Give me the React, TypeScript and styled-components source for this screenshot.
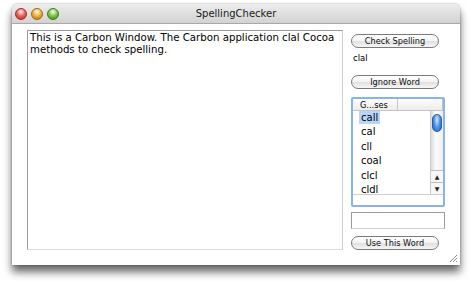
import React from 'react';
import styled, { createGlobalStyle } from 'styled-components';

const GlobalStyle = createGlobalStyle`
  html, body {
    margin: 0;
    padding: 0;
    background: #ffffff;
    font-family: "DejaVu Sans", "Liberation Sans", sans-serif;
  }
`;

const Page = styled.div`
  width: 471px;
  height: 285px;
  padding: 4px 0 0 12px;
  box-sizing: border-box;
  overflow: hidden;
`;

const Window = styled.div`
  width: 448px;
  height: 261px;
  border-radius: 5px 5px 0 0;
  background: #ffffff;
  box-shadow: 0 7px 9px rgba(0, 0, 0, 0.6), 0 0 2px rgba(0, 0, 0, 0.4);
  display: flex;
  flex-direction: column;
  position: relative;
`;

const TitleBar = styled.div`
  height: 21px;
  border-radius: 5px 5px 0 0;
  background: linear-gradient(#ededed, #d2d2d2);
  border-bottom: 1px solid #a8a8a8;
  display: flex;
  align-items: center;
  padding-left: 3px;
  position: relative;
`;

const Light = styled.span<{ $c: string; $d: string }>`
  width: 12px;
  height: 12px;
  border-radius: 50%;
  margin-right: 4px;
  background: radial-gradient(circle at 50% 30%, #ffffff 0%, ${p => p.$c} 45%, ${p => p.$d} 100%);
  border: 1px solid ${p => p.$d};
  box-sizing: border-box;
`;

const Title = styled.div`
  position: absolute;
  left: 0;
  right: 0;
  text-align: center;
  font-size: 10px;
  color: #1a1a1a;
  pointer-events: none;
`;

const Body = styled.div`
  flex: 1;
  display: grid;
  grid-template-columns: 316px 94px;
  column-gap: 8px;
  padding: 6px 15px 15px 15px;
`;

const TextArea = styled.div`
  border: 1px solid #9a9a9a;
  border-right-color: #cfcfcf;
  border-bottom-color: #dcdcdc;
  padding: 1px 2px;
  font-size: 10.2px;
  line-height: 12px;
  color: #000;
`;

const Side = styled.div`
  display: flex;
  flex-direction: column;
  padding-top: 4px;
`;

const PillButton = styled.button<{ $gap?: number }>`
  width: 88px;
  height: 14px;
  margin-top: ${p => p.$gap ?? 0}px;
  border-radius: 7px;
  border: 1px solid #7a7a7a;
  background: linear-gradient(#ffffff 0%, #f3f3f3 50%, #e0e0e0 51%, #f6f6f6 100%);
  font-family: "DejaVu Sans", sans-serif;
  font-size: 8.2px;
  color: #111;
  padding: 0;
  line-height: 12px;
`;

const Label = styled.div`
  font-size: 8.5px;
  margin: 5px 0 12px 2px;
  color: #000;
`;

const ListBox = styled.div`
  margin-top: 8px;
  height: 110px;
  border: 2px solid #8ab3e6;
  border-radius: 2px;
  box-sizing: border-box;
  display: flex;
  flex-direction: column;
  overflow: hidden;
`;

const Header = styled.div`
  height: 12px;
  flex: none;
  display: flex;
  border-bottom: 1px solid #c4c4c4;
  background: linear-gradient(#fdfdfd, #ececec);
  font-size: 8.2px;
  line-height: 12px;
  box-sizing: border-box;
`;

const HeadCell = styled.div<{ $w?: number }>`
  ${p => (p.$w ? `width: ${p.$w}px;` : 'flex: 1;')}
  padding-left: 7px;
  box-sizing: border-box;
  border-right: 1px solid #c4c4c4;
`;

const ListArea = styled.div`
  height: 83px;
  flex: none;
  display: flex;
  border-bottom: 1px solid #cfcfcf;
  overflow: hidden;
`;

const Rows = styled.div`
  flex: 1;
  padding: 0 0 0 6px;
`;

const Row = styled.div`
  height: 14.4px;
  font-size: 10px;
  line-height: 14px;
`;

const Word = styled.span<{ $sel?: boolean }>`
  padding: 1px 2px;
  background: ${p => (p.$sel ? '#b7d5fb' : 'transparent')};
`;

const Scroll = styled.div`
  width: 12px;
  border-left: 1px solid #c8c8c8;
  background: linear-gradient(90deg, #dcdcdc, #fbfbfb 40%, #efefef);
  display: flex;
  flex-direction: column;
  align-items: center;
`;

const Thumb = styled.div`
  margin-top: 3px;
  width: 10px;
  height: 18px;
  border-radius: 5px;
  background: radial-gradient(ellipse at 50% 30%, #d4ebff 0%, #4f93e8 50%, #1e5cc4 100%);
  border: 1px solid #2b5aa8;
  box-sizing: border-box;
`;

const Track = styled.div`
  flex: 1;
`;

const Arrow = styled.div`
  width: 12px;
  height: 12px;
  border-top: 1px solid #bdbdbd;
  display: flex;
  align-items: center;
  justify-content: center;
  font-size: 6px;
  color: #222;
  background: #f7f7f7;
  box-sizing: border-box;
`;

const Field = styled.div`
  margin-top: 5px;
  height: 17px;
  border: 1px solid #9a9a9a;
  border-bottom-color: #d0d0d0;
  box-sizing: border-box;
`;

const Grip = styled.svg`
  position: absolute;
  right: 2px;
  bottom: 2px;
`;

const guesses = ['call', 'cal', 'cll', 'coal', 'clcl', 'cldl'];

export default function App() {
  return (
    <>
      <GlobalStyle />
      <Page>
        <Window>
          <TitleBar>
            <Light $c="#f2625c" $d="#a92a25" />
            <Light $c="#f6b43c" $d="#a66a12" />
            <Light $c="#82c84a" $d="#3f7d1f" />
            <Title>SpellingChecker</Title>
          </TitleBar>
          <Body>
            <TextArea>
              This is a Carbon Window. The Carbon application clal Cocoa methods to check spelling.
            </TextArea>
            <Side>
              <PillButton>Check Spelling</PillButton>
              <Label>clal</Label>
              <PillButton>Ignore Word</PillButton>
              <ListBox>
                <Header>
                  <HeadCell $w={45}>G...ses</HeadCell>
                  <HeadCell />
                </Header>
                <ListArea>
                  <Rows>
                    {guesses.map((g, i) => (
                      <Row key={g}>
                        <Word $sel={i === 0}>{g}</Word>
                      </Row>
                    ))}
                  </Rows>
                  <Scroll>
                    <Thumb />
                    <Track />
                    <Arrow>▲</Arrow>
                    <Arrow>▼</Arrow>
                  </Scroll>
                </ListArea>
              </ListBox>
              <Field />
              <PillButton $gap={7}>Use This Word</PillButton>
            </Side>
          </Body>
          <Grip width="9" height="9" viewBox="0 0 9 9">
            <path d="M8 1L1 8M8 4L4 8M8 7L7 8" stroke="#8a8a8a" strokeWidth="1" />
          </Grip>
        </Window>
      </Page>
    </>
  );
}
